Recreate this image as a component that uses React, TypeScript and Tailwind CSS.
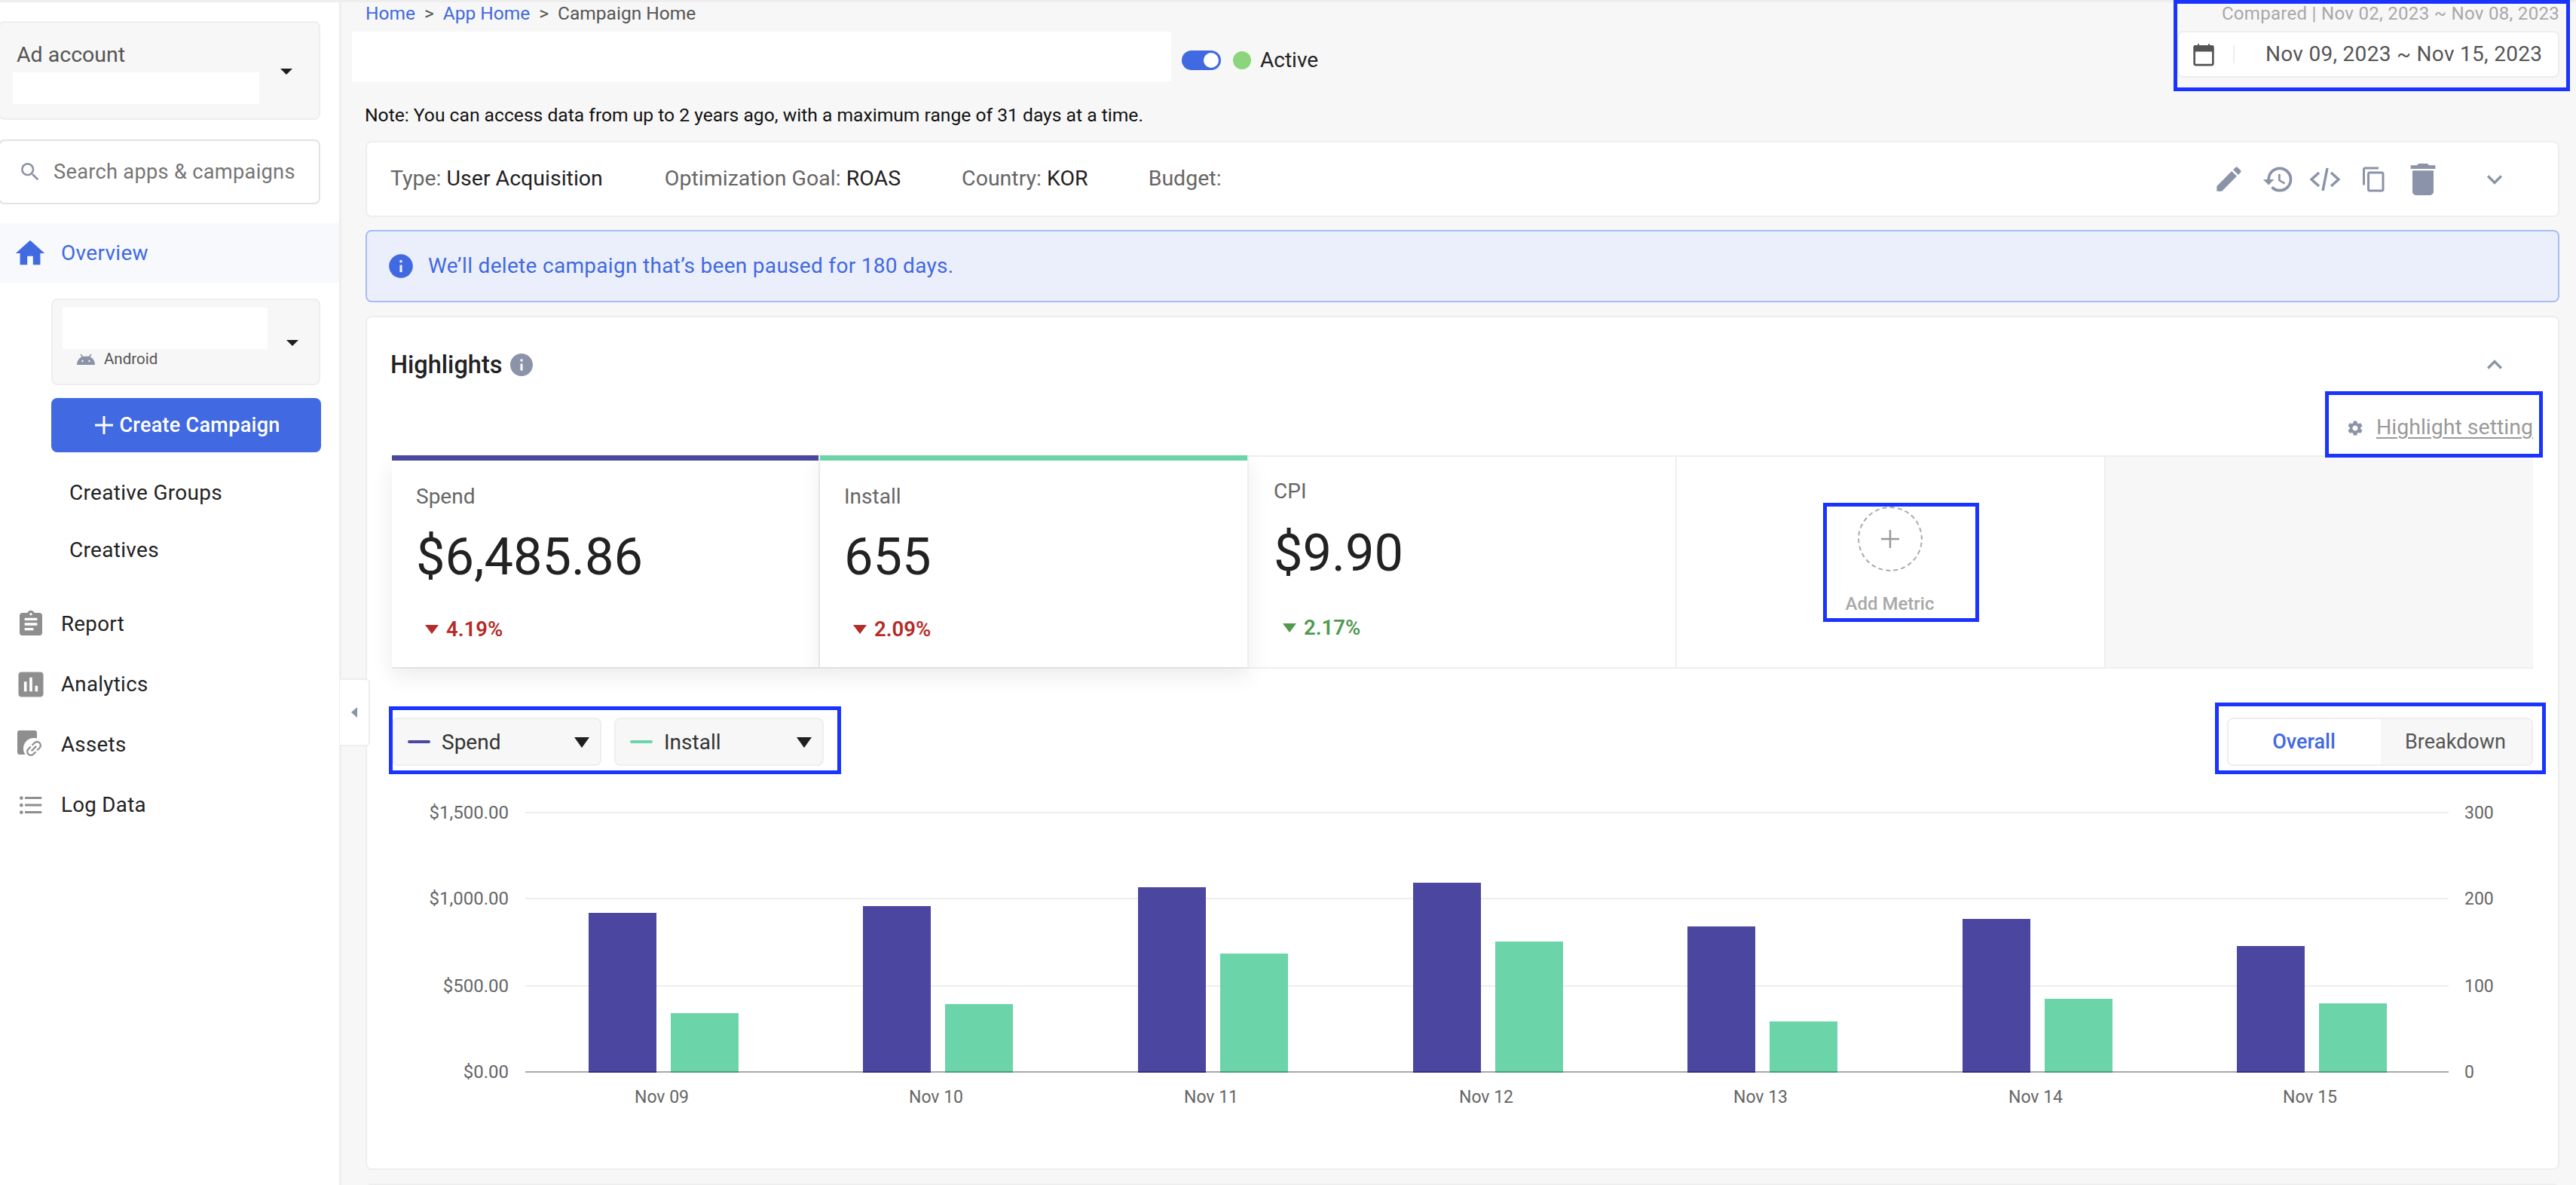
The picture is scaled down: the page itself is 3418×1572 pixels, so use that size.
import {
  MdAssessment,
  MdAssignment,
  MdContentCopy,
  MdDelete,
  MdEdit,
  MdExpandLess,
  MdExpandMore,
  MdFormatListBulleted,
  MdHistory,
  MdHome,
  MdInfo,
  MdLink,
  MdSearch,
  MdSettings,
} from "react-icons/md"

const days = [
  { label: "Nov 09", x: 781, spend: 1211, install: 1344 },
  { label: "Nov 10", x: 1145, spend: 1202, install: 1332 },
  { label: "Nov 11", x: 1510, spend: 1177, install: 1265 },
  { label: "Nov 12", x: 1875, spend: 1171, install: 1249 },
  { label: "Nov 13", x: 2239, spend: 1229, install: 1355 },
  { label: "Nov 14", x: 2604, spend: 1219, install: 1325 },
  { label: "Nov 15", x: 2968, spend: 1255, install: 1331 },
]

const ticks = [
  { y: 1078, left: "$1,500.00", right: "300" },
  { y: 1192, left: "$1,000.00", right: "200" },
  { y: 1308, left: "$500.00", right: "100" },
  { y: 1422, left: "$0.00", right: "0" },
]

function Caret({ className }: { className?: string }) {
  return (
    <svg width="16" height="8" viewBox="0 0 16 8" className={className}>
      <path d="M0 0h16L8 8z" fill="#1f1f1f" />
    </svg>
  )
}

function Android() {
  return (
    <svg width="24" height="15" viewBox="0 0 24 15" fill="#8b93a8">
      <path d="M0 15C0 9.500 3.500 5.200 8 3.800h8C20.500 5.200 24 9.500 24 15z" />
      <path d="M5 1l3 4M19 1l-3 4" stroke="#8b93a8" strokeWidth="1.500" />
      <circle cx="7.500" cy="10" r="1.200" fill="#f7f7f7" />
      <circle cx="16.500" cy="10" r="1.200" fill="#f7f7f7" />
    </svg>
  )
}

function AssetsIcon() {
  return (
    <div className="relative w-[36px] h-[38px]">
      <div className="w-[26px] h-[32px] bg-[#8e8e8e] rounded-[3px]" />
      <div className="absolute right-0 bottom-0 w-[28px] h-[28px] rounded-full bg-white flex items-center justify-center">
        <MdLink size={32} color="#8e8e8e" className="-rotate-45" />
      </div>
    </div>
  )
}

function Sidebar() {
  return (
    <aside className="w-[453px] shrink-0 bg-white border-r-[3px] border-[#eeeeee] pt-[28px]">
      <div className="-ml-[2px] w-[427px] h-[131px] bg-[#f7f7f7] border-2 border-[#eeeeee] rounded-[8px] flex items-start">
        <div className="pl-[17px] pt-[25px]">
          <p className="ml-[5px] text-[28.5px] leading-[36px] text-[#555555]">Ad account</p>
          <div className="mt-[5px] w-[327px] h-[42px] bg-white" />
        </div>
        <Caret className="ml-[28px] mt-[61px]" />
      </div>

      <div className="mt-[26px] -ml-[2px] w-[427px] h-[86px] bg-white border-2 border-[#e2e2e2] rounded-[8px] flex items-center pl-[26px]">
        <MdSearch size={32} color="#8b93a8" className="-ml-[2px]" />
        <span className="ml-[15px] text-[27.2px] text-[#757575] tracking-[0.3px] whitespace-nowrap">Search apps &amp; campaigns</span>
      </div>

      <div className="mt-[25px] h-[79px] bg-[#f7f9fd] flex items-center">
        <div className="w-[81px] flex justify-center">
          <MdHome size={46} color="#4169e1" className="-ml-[2px]" />
        </div>
        <span className="mt-[1px] text-[28px] text-[#4169e1] tracking-[0.3px]">Overview</span>
      </div>

      <div className="mt-[21px] ml-[68px] w-[357px] h-[115px] bg-[#f7f7f7] border-2 border-[#eeeeee] rounded-[8px] flex items-start pl-[13px] pt-[10px]">
        <div>
          <div className="w-[272px] h-[55px] bg-white" />
          <div className="flex items-center ml-[19px] mt-[2px]">
            <Android />
            <span className="ml-[12px] text-[20.5px] leading-[22px] text-[#555555]">Android</span>
          </div>
        </div>
        <Caret className="ml-[25px] mt-[43px]" />
      </div>

      <button className="mt-[17px] ml-[68px] w-[358px] h-[72px] bg-[#4169e1] rounded-[8px] text-white flex items-center justify-center gap-[8px] pl-[4px]">
        <svg width="24" height="24" viewBox="0 0 24 24">
          <path d="M12 0v24M0 12h24" stroke="#ffffff" strokeWidth="3" />
        </svg>
        <span className="text-[27px] font-medium tracking-[0.3px]">Create Campaign</span>
      </button>

      <p className="mt-[34px] ml-[92px] h-[40px] leading-[40px] text-[28px] text-[#222222] tracking-[0.3px]">Creative Groups</p>
      <p className="mt-[36px] ml-[92px] h-[40px] leading-[40px] text-[28px] text-[#222222] tracking-[0.3px]">Creatives</p>

      <nav className="mt-[58px] flex flex-col gap-[40px]">
        <NavItem icon={<MdAssignment size={40} color="#8e8e8e" />} label="Report" />
        <NavItem icon={<MdAssessment size={44} color="#8e8e8e" />} label="Analytics" />
        <NavItem icon={<AssetsIcon />} label="Assets" />
        <NavItem icon={<MdFormatListBulleted size={38} color="#8e8e8e" />} label="Log Data" />
      </nav>
    </aside>
  )
}

function NavItem({ icon, label }: { icon: React.ReactNode; label: string }) {
  return (
    <div className="h-[40px] flex items-center">
      <div className="w-[81px] flex justify-center">{icon}</div>
      <span className="text-[27.7px] text-[#222222] tracking-[0.3px]">{label}</span>
    </div>
  )
}

function Header() {
  return (
    <div className="flex justify-between shrink-0">
      <div>
        <div className="h-[30px] flex items-center gap-[12px] text-[24.5px] leading-[30px] whitespace-nowrap">
          <span className="text-[#4169e1]">Home</span>
          <span className="text-[#555555]">&gt;</span>
          <span className="text-[#4169e1]">App Home</span>
          <span className="text-[#555555]">&gt;</span>
          <span className="text-[#555555]">Campaign Home</span>
        </div>
        <div className="mt-[9px] -ml-[18px] h-[66px] flex items-center">
          <div className="w-[1087px] h-[66px] bg-white" />
          <div className="mt-[10px] ml-[14px] w-[52px] h-[26px] bg-[#4169e1] rounded-full flex items-center justify-end pr-[3px]">
            <div className="w-[20px] h-[20px] rounded-full bg-white" />
          </div>
          <div className="mt-[10px] ml-[16px] w-[24px] h-[24px] rounded-full bg-[#8bd67c]" />
          <span className="mt-[10px] ml-[12px] text-[28px] text-[#222222]">Active</span>
        </div>
        <p className="-ml-[1px] mt-[30px] h-[30px] leading-[30px] text-[24.65px] text-[#111111] whitespace-nowrap">
          Note: You can access data from up to 2 years ago, with a maximum range of 31 days at a time.
        </p>
      </div>
      <div className="w-[507px] -mt-[3px] flex flex-col items-end">
        <p className="h-[36px] leading-[36px] text-[24px] text-[#a8a8a8] whitespace-nowrap tracking-[0.3px]">
          Compared | Nov 02, 2023 ~ Nov 08, 2023
        </p>
        <div className="mt-[5px] w-full h-[62px] bg-white border-2 border-[#eeeeee] rounded-[8px] flex items-center pl-[18px]">
          <svg width="30" height="32" viewBox="0 0 34 36" fill="none">
            <path d="M5 6h24a2 2 0 0 1 2 2v24a2 2 0 0 1-2 2H5a2 2 0 0 1-2-2V8a2 2 0 0 1 2-2z" stroke="#555555" strokeWidth="3" />
            <path d="M3 6h28v7H3zM9 2v4M25 2v4" fill="#555555" stroke="#555555" strokeWidth="2" />
          </svg>
          <div className="ml-[24px] w-[2px] h-[24px] bg-[#eeeeee]" />
          <span className="ml-[41px] text-[28px] text-[#555555] tracking-[0.3px] whitespace-nowrap">Nov 09, 2023 ~ Nov 15, 2023</span>
        </div>
      </div>
    </div>
  )
}

function CampaignBar() {
  return (
    <div className="mt-[19px] h-[101px] shrink-0 bg-white border-2 border-[#eeeeee] rounded-[8px] flex items-center pl-[31px] text-[28.5px] text-[#666666] whitespace-nowrap">
      <span>Type: <span className="text-[#222222]">User Acquisition</span></span>
      <span className="ml-[82px]">Optimization Goal: <span className="text-[#222222]">ROAS</span></span>
      <span className="ml-[81px]">Country: <span className="text-[#222222]">KOR</span></span>
      <span className="ml-[80px]">Budget:</span>
      <div className="ml-auto flex items-center">
        <MdEdit size={43} color="#8b93a8" />
        <MdHistory size={44} color="#8b93a8" className="ml-[22px]" />
        <svg width="40" height="32" viewBox="0 0 40 32" fill="none" stroke="#8b93a8" strokeWidth="3.500" className="ml-[20px]">
          <path d="M12 7L2 16l10 9M28 7l10 9-10 9M23 1l-6 30" />
        </svg>
        <MdContentCopy size={36} color="#8b93a8" className="ml-[27px]" />
        <MdDelete size={56} color="#8b93a8" className="ml-[19px]" />
        <MdExpandMore size={40} color="#8b93a8" className="ml-[47px] mr-[64px]" />
      </div>
    </div>
  )
}

function Banner() {
  return (
    <div className="mt-[17px] h-[96px] shrink-0 bg-[#ebeffb] border-2 border-[#a6bdf7] rounded-[8px] flex items-center pl-[26px]">
      <MdInfo size={38} color="#4169e1" />
      <span className="ml-[17px] text-[28px] text-[#4169e1] tracking-[0.3px]">We&rsquo;ll delete campaign that&rsquo;s been paused for 180 days.</span>
    </div>
  )
}

function Metrics() {
  return (
    <div className="ml-[33px] w-[2841px] h-[283px] border-y-2 border-[#eeeeee] flex">
      <div className="relative z-10 w-[568px] bg-white shadow-[0_12px_28px_rgba(0,0,0,0.08)] border-r-2 border-[#eeeeee]">
        <div className="h-[7px] -mt-[2px] bg-[#4b47a0]" />
        <div className="pl-[32px]">
          <p className="mt-[30px] h-[36px] leading-[36px] text-[28px] text-[#666666]">Spend</p>
          <p className="mt-[22px] h-[80px] leading-[80px] text-[68.5px] text-[#222222]">$6,485.86</p>
          <div className="mt-[38px] h-[36px] flex items-center">
            <svg width="18" height="12" viewBox="0 0 18 12" className="ml-[12px]"><path d="M0 0h18L9 12z" fill="#b52b27" /></svg>
            <span className="ml-[10px] text-[27.5px] font-semibold text-[#b52b27]">4.19%</span>
          </div>
        </div>
      </div>
      <div className="relative z-10 w-[569px] bg-white shadow-[0_12px_28px_rgba(0,0,0,0.08)] border-r-2 border-[#eeeeee]">
        <div className="h-[7px] -mt-[2px] bg-[#6cd4a9]" />
        <div className="pl-[32px]">
          <p className="mt-[30px] h-[36px] leading-[36px] text-[28px] text-[#666666]">Install</p>
          <p className="mt-[22px] h-[80px] leading-[80px] text-[68.5px] text-[#222222]">655</p>
          <div className="mt-[38px] h-[36px] flex items-center">
            <svg width="18" height="12" viewBox="0 0 18 12" className="ml-[12px]"><path d="M0 0h18L9 12z" fill="#b52b27" /></svg>
            <span className="ml-[10px] text-[27.5px] font-semibold text-[#b52b27]">2.09%</span>
          </div>
        </div>
      </div>
      <div className="w-[568px] border-r-2 border-[#eeeeee] pl-[33px]">
        <p className="mt-[28px] h-[36px] leading-[36px] text-[28px] text-[#666666]">CPI</p>
        <p className="mt-[24px] h-[80px] leading-[80px] text-[68.5px] text-[#222222]">$9.90</p>
        <div className="mt-[41px] h-[36px] flex items-center">
          <svg width="18" height="12" viewBox="0 0 18 12" className="ml-[12px]"><path d="M0 0h18L9 12z" fill="#4f9a4f" /></svg>
          <span className="ml-[10px] text-[27.5px] font-semibold text-[#4f9a4f]">2.17%</span>
        </div>
      </div>
      <div className="w-[569px] border-r-2 border-[#eeeeee] flex flex-col items-center pt-[66px] pr-[2px]">
        <div className="w-[86px] h-[86px] rounded-full border-2 border-dashed border-[#aaaaaa] flex items-center justify-center">
          <svg width="24" height="24" viewBox="0 0 24 24"><path d="M12 0v24M0 12h24" stroke="#999999" strokeWidth="2.500" /></svg>
        </div>
        <span className="mt-[25px] text-[24px] leading-[36px] font-medium text-[#a8a8a8] whitespace-nowrap">Add Metric</span>
      </div>
      <div className="flex-1 bg-[#f7f7f7]" />
    </div>
  )
}

function Controls() {
  return (
    <div className="mt-[65px] ml-[33px] mr-[33px] h-[64px] flex items-stretch">
      <MetricSelect label="Spend" dash="bg-[#4b47a0]" />
      <MetricSelect label="Install" dash="bg-[#6cd4a9]" className="ml-[17px]" />
      <div className="ml-auto w-[406px] rounded-[8px] border-2 border-[#eeeeee] flex overflow-hidden text-[27px]">
        <div className="w-[202px] pr-[2px] flex items-center justify-center bg-white text-[#4169e1] font-medium">Overall</div>
        <div className="flex-1 pr-[2px] flex items-center justify-center bg-[#f7f7f7] text-[#555555]">Breakdown</div>
      </div>
    </div>
  )
}

function MetricSelect({ label, dash, className }: { label: string; dash: string; className?: string }) {
  return (
    <div className={`w-[278px] bg-[#f7f7f7] border-2 border-[#eeeeee] rounded-[8px] flex items-center pl-[19px] ${className ?? ""}`}>
      <div className={`w-[30px] h-[4px] rounded-full ${dash}`} />
      <span className="ml-[15px] mt-[1px] text-[28px] text-[#333333]">{label}</span>
      <svg width="20" height="14" viewBox="0 0 20 14" className="ml-auto mr-[14px] mt-[2px]"><path d="M0 0h20L10 14z" fill="#1f1f1f" /></svg>
    </div>
  )
}

function Chart() {
  const base = 1423
  return (
    <svg width="2907" height="430" viewBox="487 1060 2907 430" className="block mt-[44px]">
      {ticks.map((t) => (
        <g key={t.y}>
          <line x1="697" x2="3249" y1={t.y} y2={t.y} stroke={t.y === 1422 ? "#a8a8a8" : "#eeeeee"} strokeWidth="2" />
          <text x="675" y={t.y + 8} textAnchor="end" fontSize="24" fill="#666666">{t.left}</text>
          <text x="3270" y={t.y + 8} fontSize="23" fill="#666666">{t.right}</text>
        </g>
      ))}
      {days.map((d) => (
        <g key={d.label}>
          <rect x={d.x} y={d.spend} width="90" height={base - d.spend} fill="#4b47a0" />
          <rect x={d.x + 109} y={d.install} width="90" height={base - d.install} fill="#6cd4a9" />
          <rect x={d.x} y={base - 2} width="90" height="2" fill="#33307c" />
          <rect x={d.x + 109} y={base - 2} width="90" height="2" fill="#4a9c7a" />
          <text x={d.x + 97} y="1463" textAnchor="middle" fontSize="23" fill="#666666">{d.label}</text>
        </g>
      ))}
    </svg>
  )
}

function Highlights() {
  return (
    <div className="mt-[18px] h-[1133px] shrink-0 bg-white border-2 border-[#eeeeee] rounded-[8px]">
      <div className="h-[98px] pl-[31px] pr-[64px] flex items-center pt-[28px]">
        <span className="text-[32.5px] font-medium text-[#222222]">Highlights</span>
        <MdInfo size={36} color="#8b93a8" className="ml-[8px]" />
        <MdExpandLess size={40} color="#8b93a8" className="ml-auto" />
      </div>
      <div className="h-[85px] flex items-center justify-end pr-[33px] pt-[12px]">
        <MdSettings size={24} color="#8b93a8" />
        <span className="ml-[16px] text-[28.5px] text-[#9a9a9a] underline underline-offset-[4px]">Highlight setting</span>
      </div>
      <Metrics />
      <Controls />
      <Chart />
    </div>
  )
}

export default function App() {
  return (
    <div className="relative w-[3418px] h-[1572px] overflow-hidden bg-[#f7f7f7] flex font-['Roboto',sans-serif]">
      <div className="absolute top-0 inset-x-0 h-[3px] bg-[#eeeeee]" />
      <Sidebar />
      <main className="flex-1 min-w-0 pl-[32px] pr-[22px] pt-[3px] flex flex-col">
        <Header />
        <CampaignBar />
        <Banner />
        <Highlights />
        <div className="mt-[18px] h-[40px] shrink-0 bg-white border-2 border-[#eeeeee] rounded-[8px]" />
      </main>

      {/* sidebar collapse handle */}
      <div className="absolute left-[451px] top-[900px] w-[40px] h-[90px] bg-white border-2 border-l-0 border-[#eeeeee] rounded-r-[6px] flex items-center justify-center">
        <svg width="8" height="14" viewBox="0 0 8 14"><path d="M8 0v14L0 7z" fill="#8b93a8" /></svg>
      </div>

      {/* review annotations on top of the screenshot */}
      <div className="absolute left-[2884px] top-0 w-[526px] h-[121px] border-[5px] border-[#1a33ff]" />
      <div className="absolute left-[3085px] top-[519px] w-[289px] h-[88px] border-[5px] border-[#1a33ff]" />
      <div className="absolute left-[2419px] top-[667px] w-[207px] h-[158px] border-[5px] border-[#1a33ff]" />
      <div className="absolute left-[516px] top-[937px] w-[600px] h-[90px] border-[5px] border-[#1a33ff]" />
      <div className="absolute left-[2939px] top-[932px] w-[439px] h-[95px] border-[5px] border-[#1a33ff]" />
    </div>
  )
}
